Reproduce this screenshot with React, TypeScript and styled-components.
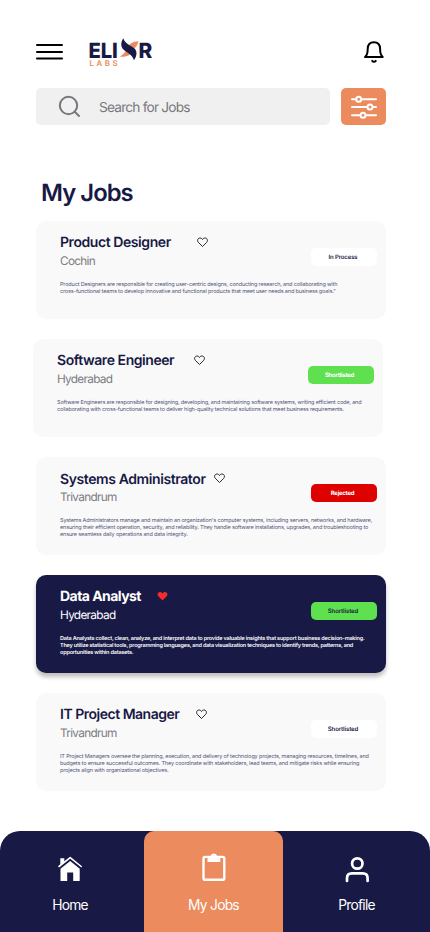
import React from 'react';
import styled, { createGlobalStyle } from 'styled-components';

const navy = '#181945';
const orange = '#eb8b5e';

const GlobalStyle = createGlobalStyle`
  * { box-sizing: border-box; }
  body { margin: 0; background: #fff; font-family: Inter, "Liberation Sans", sans-serif; text-rendering: geometricPrecision; }
  h1, h2, p { margin: 0; }
  button { border: 0; padding: 0; background: none; font: inherit; }
  svg { display: block; flex: none; }
`;

const Screen = styled.div`
  width: 430px;
  height: 932px;
  display: flex;
  flex-direction: column;
  overflow: hidden;
  background: #fff;
`;

const Header = styled.header`
  height: 88px;
  padding: 36px 44px 0 36px;
  display: flex;
  align-items: flex-start;
`;

const MenuButton = styled.button`
  width: 27px;
  margin-top: 7px;
`;

const LogoWrap = styled.div`
  margin-left: 25px;
  flex: 1;
`;

const BellButton = styled.button`
  margin: 4px 0 0;
`;

const SearchRow = styled.div`
  display: flex;
  gap: 11px;
  padding: 0 44px 0 36px;
`;

const SearchBox = styled.div`
  width: 294px;
  height: 37px;
  padding-left: 22px;
  display: flex;
  align-items: center;
  gap: 18px;
  border-radius: 5px;
  background: #f0f0f0;
`;

const SearchHint = styled.span`
  padding-top: 2px;
  color: #77787d;
  font-size: 13.7px;
  letter-spacing: -0.8px;
`;

const FilterButton = styled.button`
  width: 45px;
  height: 37px;
  display: grid;
  place-items: center;
  border-radius: 5px;
  background: ${orange};
`;

const Title = styled.h1`
  height: 30px;
  margin: 53px 0 13px 41px;
  color: ${navy};
  font-size: 23.8px;
  line-height: 30px;
  font-weight: 600;
  letter-spacing: -0.95px;
`;

const List = styled.main`
  display: flex;
  flex-direction: column;
  gap: 20px;
  padding-left: 36px;
`;

const Card = styled.article<{ $active?: boolean; $shift?: number }>`
  width: 350px;
  height: 98px;
  margin-left: ${p => p.$shift ?? 0}px;
  padding: 11px 9px 0 24px;
  border-radius: 10px;
  background: ${p => (p.$active ? navy : '#f9f9f9')};
  box-shadow: ${p => (p.$active ? '0 4px 4px rgba(0, 0, 0, 0.25)' : 'none')};
  color: ${p => (p.$active ? '#fff' : navy)};
`;

const CardTop = styled.div`
  display: flex;
  justify-content: space-between;
  height: 50px;
`;

const Heading = styled.div<{ $gap: number }>`
  display: flex;
  align-items: center;
  gap: ${p => p.$gap}px;
  height: 20px;
`;

const JobTitle = styled.h2<{ $space: number; $nudge?: number; $bold?: boolean }>`
  font-size: 14px;
  line-height: 20px;
  font-weight: ${p => (p.$bold ? 700 : 600)};
  letter-spacing: ${p => p.$space}px;
  padding-top: ${p => p.$nudge ?? 2}px;
  white-space: nowrap;
`;

const Place = styled.p<{ $active?: boolean }>`
  font-size: 11.8px;
  line-height: 18px;
  letter-spacing: ${p => (p.$active ? -0.68 : -0.7)}px;
  color: ${p => (p.$active ? '#fff' : '#7b7c81')};
`;

const Badge = styled.span<{ $bg: string; $color: string; $bold?: boolean }>`
  width: 66px;
  height: 18px;
  margin-top: 16px;
  padding-right: ${p => (p.$bold ? 3 : 2)}px;
  border-radius: 5px;
  background: ${p => p.$bg};
  color: ${p => p.$color};
  font-size: 6px;
  line-height: 19px;
  font-weight: ${p => (p.$bold ? 700 : 600)};
  letter-spacing: ${p => (p.$bold ? -0.28 : -0.12)}px;
  text-align: center;
`;

const Description = styled.p<{ $active?: boolean }>`
  font-size: 5.5px;
  line-height: 7px;
  font-weight: ${p => (p.$active ? 600 : 400)};
  letter-spacing: ${p => (p.$active ? -0.195 : -0.146)}px;
  color: ${p => (p.$active ? '#fff' : '#52547a')};
  white-space: nowrap;
`;

const Nav = styled.nav`
  display: grid;
  grid-template-columns: 144px 139px 147px;
  height: 101px;
  margin-top: auto;
  overflow: hidden;
  border-radius: 20px 20px 0 0;
  background: ${navy};
`;

const NavItem = styled.button<{ $active?: boolean; $shift?: number }>`
  display: flex;
  flex-direction: column;
  align-items: center;
  padding: 22px 0 0;
  padding-right: ${p => p.$shift ?? 0}px;
  border-radius: 10px 10px 0 0;
  background: ${p => (p.$active ? orange : 'transparent')};
  color: #fff;
  font-size: 13.8px;
  line-height: 18px;
  letter-spacing: -0.75px;
`;

const NavIcon = styled.span`
  height: 43px;
`;

const Logo = () => (
  <svg width="66" height="32" viewBox="0 0 66 32" role="img" aria-label="Elixr Labs">
    <text x="0.400" y="21.600" fontFamily="Inter, sans-serif" fontSize="21" fontWeight="800" fill={navy} textLength="29.500" lengthAdjust="spacingAndGlyphs">ELI</text>
    <text x="50.600" y="21.600" fontFamily="Inter, sans-serif" fontSize="21" fontWeight="800" fill={navy} textLength="13.800" lengthAdjust="spacingAndGlyphs">R</text>
    <path d="M50.400 5.300c-5.400.2-8.600 2.200-11 6.200-1.800 3-1.500 5.200-7.600 9.200 6.400.3 10.200-1 12-4.700 1.500-3.200 5.700-5 6.600-10.700Z" fill={orange} />
    <path d="M35.300 2.200c-2.600 4.200-2.800 8.300.2 11.300 3.500 3.500 8.500 4.500 10.500 10.700 2.800-4 3.500-8.200.8-11.400C44 9.500 37.200 8.500 35.300 2.200Z" fill={navy} />
    <text x="1.500" y="29.800" fontFamily="Inter, sans-serif" fontSize="7.800" fontWeight="600" fill={orange} textLength="28">LABS</text>
  </svg>
);

const Heart = ({ filled }: { filled?: boolean }) => (
  <svg width="11" height="10" viewBox="0 0 11 10" fill={filled ? '#f12c2c' : 'none'} stroke={filled ? 'none' : '#111'} strokeWidth="0.9">
    <path d="M5.500 9.500 1.300 5.300C-.2 3.500.8 1 3 1c1.100 0 2 .6 2.500 1.500C6 1.600 6.900 1 8 1c2.200 0 3.200 2.500 1.700 4.300Z" />
  </svg>
);

interface Job {
  title: string;
  place: string;
  lines: string[];
  status: string;
  bg: string;
  color: string;
  gap: number;
  space: number;
  shift?: number;
  nudge?: number;
  active?: boolean;
  bold?: boolean;
}

const jobs: Job[] = [
  {
    title: 'Product Designer', place: 'Cochin', status: 'In Process', bg: '#fff', color: navy, gap: 26, space: -0.43,
    lines: [
      'Product Designers are responsible for creating user-centric designs, conducting research, and collaborating with',
      'cross-functional teams to develop innovative and functional products that meet user needs and business goals."',
    ],
  },
  {
    title: 'Software Engineer', place: 'Hyderabad', status: 'Shortlisted', bg: '#5fe04f', color: '#fff', gap: 20, space: -0.44, shift: -3, bold: true,
    lines: [
      'Software Engineers are responsible for designing, developing, and maintaining software systems, writing efficient code, and',
      'collaborating with cross-functional teams to deliver high-quality technical solutions that meet business requirements.',
    ],
  },
  {
    title: 'Systems Administrator', place: 'Trivandrum', status: 'Rejected', bg: '#df0000', color: '#fff', gap: 8, space: -0.41, nudge: 4, bold: true,
    lines: [
      "Systems Administrators manage and maintain an organization's computer systems, including servers, networks, and hardware,",
      'ensuring their efficient operation, security, and reliability. They handle software installations, upgrades, and troubleshooting to',
      'ensure seamless daily operations and data integrity.',
    ],
  },
  {
    title: 'Data Analyst', place: 'Hyderabad', status: 'Shortlisted', bg: '#5fe04f', color: navy, gap: 16, space: -0.55, active: true,
    lines: [
      'Data Analysts collect, clean, analyze, and interpret data to provide valuable insights that support business decision-making.',
      'They utilize statistical tools, programming languages, and data visualization techniques to identify trends, patterns, and',
      'opportunities within datasets.',
    ],
  },
  {
    title: 'IT Project Manager', place: 'Trivandrum', status: 'Shortlisted', bg: '#fff', color: navy, gap: 17, space: -0.49,
    lines: [
      'IT Project Managers oversee the planning, execution, and delivery of technology projects, managing resources, timelines, and',
      'budgets to ensure successful outcomes. They coordinate with stakeholders, lead teams, and mitigate risks while ensuring',
      'projects align with organizational objectives.',
    ],
  },
];

export default function App() {
  return (
    <Screen>
      <GlobalStyle />
      <Header>
        <MenuButton aria-label="Menu">
          <svg width="27" height="18" viewBox="0 0 27 18" stroke="#000" strokeWidth="2" strokeLinecap="round">
            <path d="M1 2h25M1 9h25M1 15.600h25" />
          </svg>
        </MenuButton>
        <LogoWrap><Logo /></LogoWrap>
        <BellButton aria-label="Notifications">
          <svg width="24" height="24" viewBox="0 0 24 24" fill="none" stroke="#000" strokeWidth="2" strokeLinecap="round" strokeLinejoin="round">
            <path d="M3 17c2.700-2 2.700-4.500 2.700-8C5.700 4.700 8 2.200 11.900 2.200S18.100 4.700 18.100 9c0 3.500 0 6 2.700 8Z" />
            <path d="M10.200 20.900c1 1.200 2.600 1.200 3.600 0" />
          </svg>
        </BellButton>
      </Header>
      <SearchRow>
        <SearchBox>
          <svg width="23" height="23" viewBox="0 0 23 23" fill="none" stroke="#77787d" strokeWidth="2" strokeLinecap="round">
            <circle cx="10.500" cy="10.500" r="8.700" />
            <path d="m17 17 4 4" />
          </svg>
          <SearchHint>Search for Jobs</SearchHint>
        </SearchBox>
        <FilterButton aria-label="Filters">
          <svg width="27" height="24" viewBox="0 0 27 24" fill={orange} stroke="#fff" strokeWidth="2" strokeLinecap="round">
            <path d="M2 4.300h24M2 12h24M2 20.300h24" />
            <circle cx="8.700" cy="4.300" r="2.500" />
            <circle cx="20" cy="12" r="2.500" />
            <circle cx="13" cy="20.300" r="2.500" />
          </svg>
        </FilterButton>
      </SearchRow>
      <Title>My Jobs</Title>
      <List>
        {jobs.map(job => (
          <Card key={job.title} $active={job.active} $shift={job.shift}>
            <CardTop>
              <div>
                <Heading $gap={job.gap}>
                  <JobTitle $space={job.space} $nudge={job.nudge} $bold={job.active}>{job.title}</JobTitle>
                  <Heart filled={job.active} />
                </Heading>
                <Place $active={job.active}>{job.place}</Place>
              </div>
              <Badge $bg={job.bg} $color={job.color} $bold={job.bold}>{job.status}</Badge>
            </CardTop>
            <Description $active={job.active}>
              {job.lines.map(line => <React.Fragment key={line}>{line}<br /></React.Fragment>)}
            </Description>
          </Card>
        ))}
      </List>
      <Nav>
        <NavItem $shift={4}>
          <NavIcon>
            <svg width="26" height="32" viewBox="0 0 26 32" fill="#fff">
              <path d="M3.300 5.200h4v3.500l-4 3.300ZM13.200 8 22.700 15.800V28H16.200v-8.500h-6V28H3.500V15.800Z" />
              <path d="m2 13.500 11.200-8.900L24.200 13.500" fill="none" stroke="#fff" strokeWidth="1.600" strokeLinecap="round" strokeLinejoin="round" />
            </svg>
          </NavIcon>
          Home
        </NavItem>
        <NavItem $active>
          <NavIcon>
            <svg width="24" height="32" viewBox="0 0 24 32">
              <rect x="1.500" y="3.900" width="20.800" height="22.900" rx="1.600" fill="none" stroke="#fff" strokeWidth="2.400" />
              <path fillRule="evenodd" fill="#fff" d="M5.500 3h3.200a3.300 3.300 0 0 1 6.400 0h3.200v5.900H5.500ZM11.900 2.800a1.200 1.200 0 1 0 0 2.400 1.200 1.200 0 0 0 0-2.400Z" />
            </svg>
          </NavIcon>
          My Jobs
        </NavItem>
        <NavItem>
          <NavIcon>
            <svg width="26" height="32" viewBox="0 0 26 32" fill="none" stroke="#fff" strokeWidth="2.700" strokeLinecap="round">
              <circle cx="13.300" cy="10.500" r="5.200" />
              <path d="M3 28v-2.800c0-3 1.900-4.800 4.800-4.800h11c2.900 0 4.800 1.800 4.800 4.800V28" />
            </svg>
          </NavIcon>
          Profile
        </NavItem>
      </Nav>
    </Screen>
  );
}
